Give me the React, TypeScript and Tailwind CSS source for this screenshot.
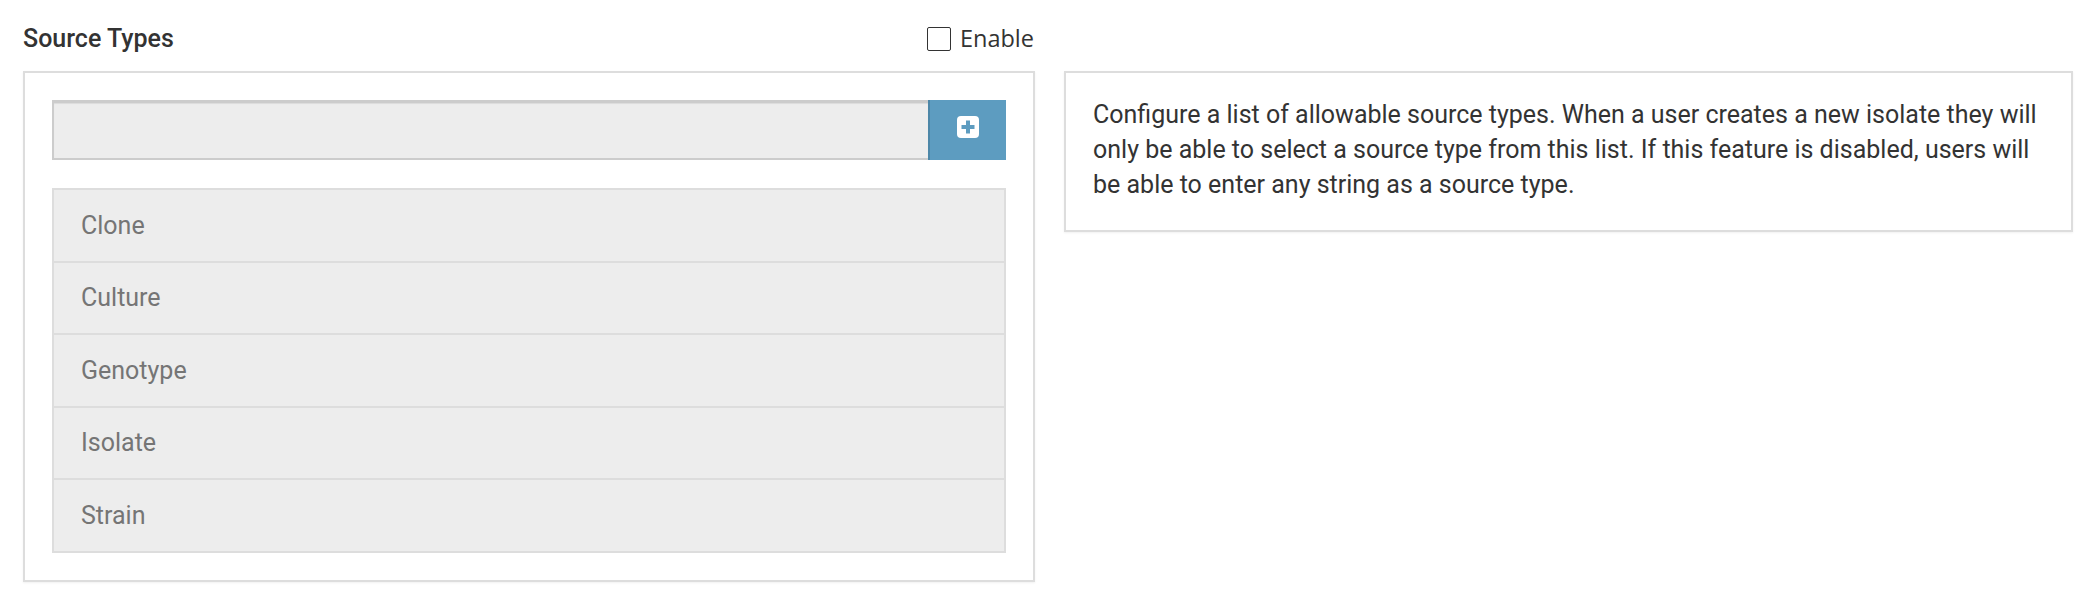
import React from "react";

const items = ["Clone", "Culture", "Genotype", "Isolate", "Strain"];

export default function App() {
  return (
    <div className="w-[2100px] h-[606px] bg-white font-['Roboto',sans-serif]">
      <div className="flex pl-[23px] gap-[29px]">
        <div className="w-[1012px] flex flex-col">
          <div className="h-[71px] pt-[6px] flex items-center justify-between">
            <div className="text-[25px] font-medium text-[#333] leading-none">Source Types</div>
            <label className="flex items-center gap-[9px] pr-[1px]">
              <span className="block w-[24px] h-[24px] border-[1.5px] border-[#333] rounded-[2px] bg-white" />
              <span className="font-['Open_Sans',sans-serif] text-[23.5px] text-[#333] leading-none">Enable</span>
            </label>
          </div>
          <div className="border-2 border-[#ddd] p-[27px] shadow-[0_1px_2px_rgba(0,0,0,0.06)]">
            <div className="flex h-[60px]">
              <div className="flex-1 bg-[#ededed] border-2 border-r-0 border-[#cccccc] border-t-[3px] shadow-[inset_0_1px_1px_rgba(0,0,0,0.075)]" />
              <div className="w-[78px] bg-[#5d9cc0] border-l-2 border-[#4d87a8] flex items-center justify-center pb-[6px]">
                <svg width="22" height="22" viewBox="0 0 22 22">
                  <rect x="0" y="0" width="22" height="22" rx="4" fill="#ffffff" />
                  <rect x="4.5" y="9" width="13" height="4" fill="#5d9cc0" />
                  <rect x="9" y="4.5" width="4" height="13" fill="#5d9cc0" />
                </svg>
              </div>
            </div>
            <div className="mt-[28px] border-2 border-[#ddd] bg-[#ededed]">
              {items.map((t, i) => (
                <div
                  key={t}
                  className={
                    "h-[70.6px] flex items-center pl-[27px] text-[25px] text-[#757575] " +
                    (i < items.length - 1 ? "border-b-2 border-[#ddd] box-content" : "")
                  }
                >
                  {t}
                </div>
              ))}
            </div>
          </div>
        </div>
        <div className="w-[1009px] pt-[71px]">
          <div className="border-2 border-[#ddd] pl-[27px] pr-[24px] pt-[24px] pb-[28px] shadow-[0_1px_2px_rgba(0,0,0,0.06)]">
            <p className="text-[25px] leading-[35px] text-[#333]">
              Configure a list of allowable source types. When a user creates a new isolate they will only be able to select a source type from this list. If this feature is disabled, users will be able to enter any string as a source type.
            </p>
          </div>
        </div>
      </div>
    </div>
  );
}
